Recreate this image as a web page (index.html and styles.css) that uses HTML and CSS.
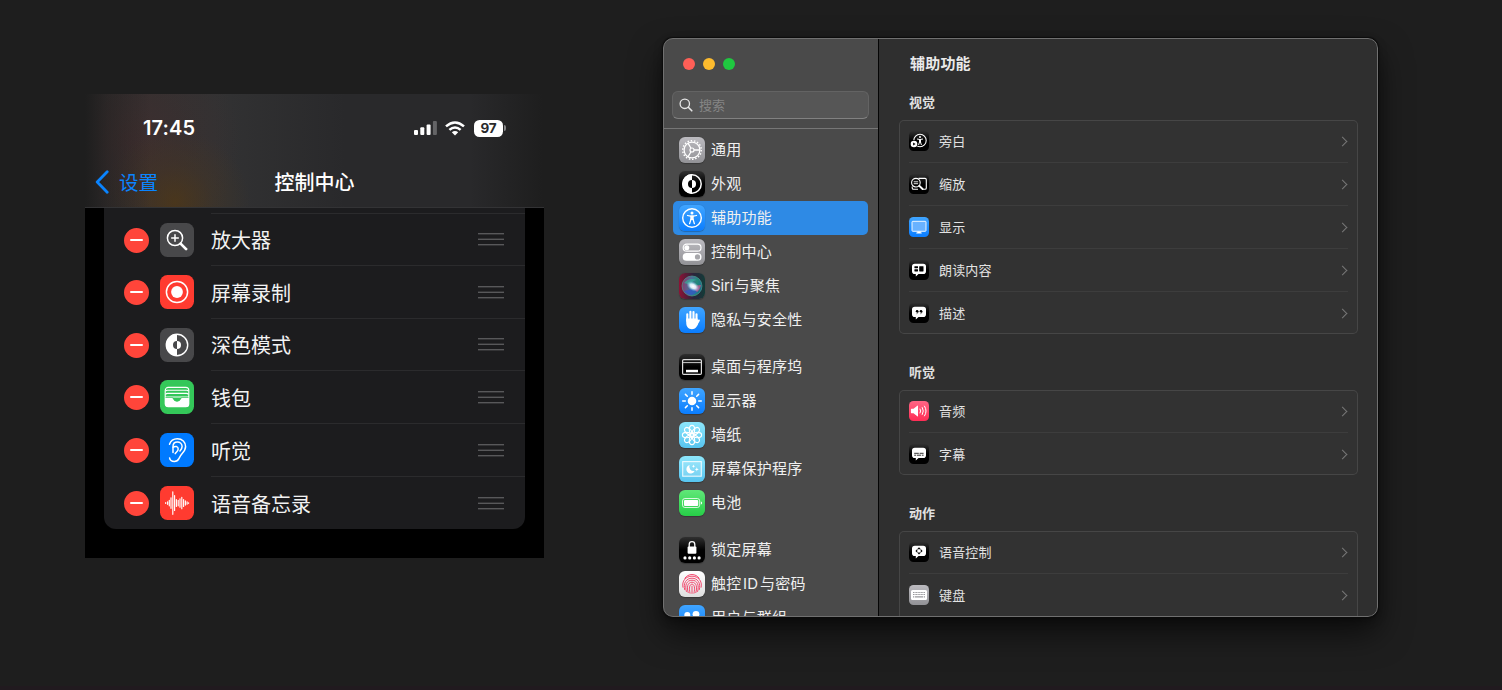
FILE: index.html
```html
<!DOCTYPE html>
<html lang="zh-CN">
<head>
<meta charset="utf-8">
<title>控制中心 · 辅助功能</title>
<link rel="stylesheet" href="styles.css">
</head>
<body>
<main class="stage">
  <section class="phone">
    <header class="phone-head">
      <div class="status">
        <span class="clock">17:45</span>
        <span class="status-icons">
          <svg width="23" height="14" viewBox="0 0 23 14"><g fill="#fff"><rect x="0" y="9" width="4" height="5" rx="1"/><rect x="6.3" y="6.2" width="4" height="7.8" rx="1"/><rect x="12.6" y="3.4" width="4" height="10.6" rx="1"/><rect x="18.9" y="0" width="4" height="14" rx="1" opacity=".28"/></g></svg>
          <svg class="wifi" width="20" height="15" viewBox="0 0 20 15"><g fill="none" stroke="#fff" stroke-width="2.5"><path d="M1 5.4Q5.4 1.4 10 1.4t9 4"/><path d="M4.400 8.800Q7 6.400 10 6.400t5.600 2.400"/></g><path fill="#fff" d="M6.800 11.300Q10 8.800 13.200 11.300L10 14.600z"/></svg>
          <span class="batt">97</span><span class="batt-tip"></span>
        </span>
      </div>
      <div class="nav">
        <span class="back"><svg width="14" height="24" viewBox="0 0 14 24"><path d="M12.200 1.800L2.200 12l10 10.200" fill="none" stroke="#0a84ff" stroke-width="2.800" stroke-linecap="round" stroke-linejoin="round"/></svg><span>设置</span></span>
        <span class="nav-title">控制中心</span>
      </div>
    </header>
    <div class="phone-body">
      <div class="card">
        <div class="stub"></div>
        <div class="prow"><i class="minus"></i><svg class="picon" viewBox="0 0 34 34"><rect width="34" height="34" rx="7.500" fill="#48484a"/><g fill="none" stroke="#fff" stroke-linecap="round"><circle cx="15" cy="15" r="7.600" stroke-width="1.500"/><path d="M15 11.700v6.600M11.700 15h6.600" stroke-width="1.500"/><path d="M20.600 20.600l5.500 5.500" stroke-width="2.700"/></g></svg><div class="plabel"><span>放大器</span><span class="grip"></span></div></div>
        <div class="prow tall"><i class="minus"></i><svg class="picon" viewBox="0 0 34 34"><rect width="34" height="34" rx="7.500" fill="#ff3b30"/><circle cx="17" cy="17" r="10.600" fill="none" stroke="#fff" stroke-width="1.500"/><circle cx="17" cy="17" r="5.900" fill="#fff"/></svg><div class="plabel"><span>屏幕录制</span><span class="grip"></span></div></div>
        <div class="prow"><i class="minus"></i><svg class="picon" viewBox="0 0 34 34"><rect width="34" height="34" rx="7.500" fill="#48484a"/><circle cx="17" cy="17" r="10.700" fill="none" stroke="#fff" stroke-width="1.400"/><path fill="#fff" d="M17 6a11 11 0 0 0 0 22v-7a4 4 0 0 1 0-8z"/><path fill="#fff" d="M17 13a4 4 0 0 1 0 8z"/></svg><div class="plabel"><span>深色模式</span><span class="grip"></span></div></div>
        <div class="prow tall"><i class="minus"></i><svg class="picon" viewBox="0 0 34 34"><rect width="34" height="34" rx="7.500" fill="#34c759"/><rect x="5.200" y="7.400" width="23.600" height="19.400" rx="3" fill="none" stroke="#fff" stroke-width="1.100"/><path d="M5.500 11.200q.8-.9 2-.9h19q1.200 0 2 .9M5.500 14.300q.8-.9 2-.9h19q1.200 0 2 .9" fill="none" stroke="#fff" stroke-width="1.100"/><path fill="#fff" d="M5 16.500h24V24q0 3-3 3H8q-3 0-3-3z"/><path fill="#34c759" d="M5.500 17.200h6.300c1.200 0 1.700.5 2.300 1.500.7 1.300 1.600 2.100 2.900 2.100s2.200-.8 2.900-2.100c.6-1 1.100-1.500 2.300-1.500h6.300v.9h-6c-1 0-1.300.5-1.800 1.200-.9 1.500-2 2.200-3.700 2.200s-2.800-.7-3.700-2.200c-.5-.7-.8-1.200-1.800-1.200h-6z"/><path fill="#34c759" d="M12.500 17.600h9l-2.200 3.200q-2.300 1.400-4.600 0z"/></svg><div class="plabel"><span>钱包</span><span class="grip"></span></div></div>
        <div class="prow tall"><i class="minus"></i><svg class="picon" viewBox="0 0 34 34"><rect width="34" height="34" rx="7.500" fill="#007aff"/><g fill="none" stroke="#fff" stroke-width="1.500" stroke-linecap="round" stroke-linejoin="round"><path d="M9.500 11.300C10.700 7.700 13.600 5.700 17.300 5.700c5 0 8.300 3.400 8.300 7.900 0 3.100-1.300 4.700-3.400 7-1.700 1.900-2.300 3-3.300 5-1 2-2.500 2.800-4.600 2.800-2.500 0-4.400-1.200-4.700-3.500"/><path d="M13 19.600V13.700c0-2.800 1.800-4.700 4.300-4.700 2.700 0 4.800 1.900 4.800 4.600 0 2-1 3-2.200 4.400"/><path d="M13.200 14.300c1.800-1.600 5-1 5 1.700 0 2.300-2.200 3.200-3 4.600"/></g></svg><div class="plabel"><span>听觉</span><span class="grip"></span></div></div>
        <div class="prow last"><i class="minus"></i><svg class="picon" viewBox="0 0 34 34"><rect width="34" height="34" rx="7.500" fill="#ff3b30"/><path d="M5.700 16.600v.8M7.600 15.700v2.600M9.300 14.200v5.600M11 11.700v10.600M12.800 5.800v22.500M14.600 9.500v15M16.400 13.500v7M18.200 14.200v5.600M20 12.800v8.400M21.800 11.300v11.400M23.600 13.500v7M25.400 14.900v4.200M27.100 15.800v2.400M28.600 16.700v.6" stroke="#fff" stroke-width="1.150" stroke-linecap="round"/></svg><div class="plabel"><span>语音备忘录</span><span class="grip"></span></div></div>
      </div>
    </div>
  </section>

  <section class="window">
    <aside class="side">
      <div class="lights"><i class="red"></i><i class="yellow"></i><i class="green"></i></div>
      <div class="search"><svg width="14" height="14" viewBox="0 0 14 14"><g fill="none" stroke="#e6e6e6" stroke-width="1.300" stroke-linecap="round"><circle cx="5.800" cy="5.800" r="4.700"/><path d="M9.300 9.300l3.500 3.500" stroke-width="1.600"/></g></svg>搜索</div>
      <ul class="menu">
        <li><svg class="mi gray" viewBox="0 0 26 26"><g fill="none" stroke="#fff"><circle cx="13" cy="13" r="7.900" stroke-width="1.300"/><circle cx="13" cy="13" r="9.300" stroke-width="1.500" stroke-dasharray="1.500 1.746"/><circle cx="13" cy="13" r="2" stroke-width="1.200"/><path d="M15 13h6M12 11.300L9 6.100M12 14.700L9 19.900" stroke-width="1.300"/></g></svg>通用</li>
        <li><svg class="mi black" viewBox="0 0 26 26"><circle cx="13" cy="13" r="9.200" fill="none" stroke="#fff" stroke-width="1.500"/><path fill="#fff" d="M13 3.100a9.900 9.900 0 0 0 0 19.800v-5.900a4 4 0 0 1 0-8z"/><path fill="#fff" d="M13 9a4 4 0 0 1 0 8z"/></svg>外观</li>
        <li class="on"><svg class="mi blue" viewBox="0 0 26 26"><circle cx="13" cy="13" r="9.300" fill="none" stroke="#fff" stroke-width="1.400"/><circle cx="13" cy="7.900" r="1.500" fill="#fff"/><path d="M8.500 10.500l3.200.6h2.600l3.200-.6M11.900 14.500L10.600 18.700M14.100 14.500l1.300 4.200" fill="none" stroke="#fff" stroke-width="1.250" stroke-linecap="round" stroke-linejoin="round"/><path d="M11.300 10.600h3.400v4.400h-3.400z" fill="#fff"/></svg>辅助功能</li>
        <li><svg class="mi gray" viewBox="0 0 26 26"><rect x="4.200" y="5.200" width="17.800" height="6.900" rx="3.450" fill="none" stroke="#fff" stroke-width="1.200"/><circle cx="7.800" cy="8.650" r="2.500" fill="#fff"/><rect x="3.700" y="14.100" width="18.800" height="7.700" rx="3.850" fill="#fff"/><circle cx="18.500" cy="17.950" r="2.600" fill="#a6a6aa"/></svg>控制中心</li>
        <li><svg class="mi siri" viewBox="0 0 26 26"><defs><linearGradient id="siri-bg"><stop stop-color="#8d1235"/><stop offset=".55" stop-color="#2c243b"/><stop offset="1" stop-color="#123c38"/></linearGradient><linearGradient id="siri-orb" x1="0" y1=".4" x2="1" y2=".6"><stop stop-color="#8c3a6c"/><stop offset=".42" stop-color="#4a6f98"/><stop offset=".7" stop-color="#238a78"/><stop offset="1" stop-color="#196a90"/></linearGradient><radialGradient id="siri-glow"><stop stop-color="#fff"/><stop offset=".45" stop-color="#e6f6ff" stop-opacity=".9"/><stop offset="1" stop-color="#7ac8f4" stop-opacity="0"/></radialGradient></defs><rect width="26" height="26" rx="6" fill="url(#siri-bg)"/><circle cx="13" cy="13" r="10" fill="url(#siri-orb)" stroke="#4e9a92" stroke-width=".7"/><path d="M5 18q8-1 16-5-2 8-8 9-5 0-8-4" fill="#3156c8" opacity=".75"/><path d="M12 13l10-1q-1 5-4 7z" fill="#dd527d" opacity=".7"/><path d="M5 10q5-6 13-3-4 0-6 5z" fill="#32b599" opacity=".65"/><ellipse cx="14" cy="13.300" rx="7" ry="4.500" transform="rotate(30 14 13.300)" fill="url(#siri-glow)"/></svg><span><span class="siri-word">Siri</span>与聚焦</span></li>
        <li><svg class="mi blue" viewBox="0 0 26 26"><g fill="none" stroke="#fff" stroke-width="2.100" stroke-linecap="round"><path d="M8.300 14V7.200M11.400 13V4.800M14.500 13V5M17.500 14V7.300M17.300 17.800l2.500-4.300"/></g><path fill="#fff" d="M7.250 11.500h11.300l.7 4.300c-1 4-3 6.400-6.300 6.400-3.500 0-5.700-2.600-5.700-6.200z"/></svg>隐私与安全性</li>
        <li class="gap"><svg class="mi black" viewBox="0 0 26 26"><rect x="3.600" y="5.600" width="18.800" height="14.800" rx="1.200" fill="none" stroke="#ddd" stroke-width="1.200"/><path d="M4 8.600h18" stroke="#ccc" stroke-width="1"/><rect x="7" y="15.800" width="12" height="2.500" fill="#fff"/></svg>桌面与程序坞</li>
        <li><svg class="mi blue" viewBox="0 0 26 26"><circle cx="13" cy="13" r="4.300" fill="#fff"/><path d="M13 3.700v2.600M13 19.700v2.600M3.700 13h2.600M19.700 13h2.600M6.400 6.400l1.900 1.900M17.700 17.700l1.900 1.900M6.400 19.600l1.900-1.900M17.700 8.300l1.900-1.900" stroke="#fff" stroke-width="1.500" stroke-linecap="round"/></svg>显示器</li>
        <li><svg class="mi cyan" viewBox="0 0 26 26"><g fill="none" stroke="#fff" stroke-width="1.150"><ellipse cx="13" cy="7.500" rx="2.700" ry="4.100"/><ellipse cx="13" cy="7.500" rx="2.700" ry="4.100" transform="rotate(45 13 13)"/><ellipse cx="13" cy="7.500" rx="2.700" ry="4.100" transform="rotate(90 13 13)"/><ellipse cx="13" cy="7.500" rx="2.700" ry="4.100" transform="rotate(135 13 13)"/><ellipse cx="13" cy="7.500" rx="2.700" ry="4.100" transform="rotate(180 13 13)"/><ellipse cx="13" cy="7.500" rx="2.700" ry="4.100" transform="rotate(225 13 13)"/><ellipse cx="13" cy="7.500" rx="2.700" ry="4.100" transform="rotate(270 13 13)"/><ellipse cx="13" cy="7.500" rx="2.700" ry="4.100" transform="rotate(315 13 13)"/><circle cx="13" cy="13" r="2"/></g></svg>墙纸</li>
        <li><svg class="mi cyan" viewBox="0 0 26 26"><rect x="3.700" y="5.600" width="18.600" height="14.600" fill="#fff" fill-opacity=".15" stroke="#fff" stroke-opacity=".85" stroke-width="1.100"/><path fill="#fff" d="M10.600 9a4.300 4.300 0 1 0 5 5.900A4.300 4.300 0 0 1 10.600 9zM14.500 8.600l.5 1.200 1.200.5-1.200.5-.5 1.200-.5-1.200-1.200-.5 1.200-.5zM17.800 11.300l.5 1.500 1.500.6-1.500.6-.5 1.500-.5-1.500-1.500-.6 1.500-.6z"/></svg>屏幕保护程序</li>
        <li><svg class="mi lime" viewBox="0 0 26 26"><rect x="3.500" y="8.500" width="17.200" height="9" rx="2.400" fill="none" stroke="#fff" stroke-opacity=".8" stroke-width="1"/><rect x="5" y="10" width="14.200" height="6" rx="1" fill="#fff"/><path d="M21.900 11.400q1.200.3 1.200 1.600t-1.200 1.600z" fill="#fff"/></svg>电池</li>
        <li class="gap"><svg class="mi black" viewBox="0 0 26 26"><rect x="8.600" y="9.500" width="8.800" height="7.300" rx="1" fill="#fff"/><path d="M10.200 10V7.500a2.800 2.800 0 0 1 5.600 0V10" fill="none" stroke="#fff" stroke-width="1.300"/><g fill="#fff"><circle cx="6" cy="20.900" r="1.600"/><circle cx="10.700" cy="20.900" r="1.600"/><circle cx="15.400" cy="20.900" r="1.600"/><circle cx="20.100" cy="20.900" r="1.600"/></g></svg>锁定屏幕</li>
        <li><svg class="mi white" viewBox="0 0 26 26"><g fill="none" stroke="#f24c70" stroke-width="1" stroke-linecap="round"><path d="M5.800 7.200C9.500 2.200 16.500 2.200 20.200 7.200"/><path d="M3.900 16.200C2.500 9.800 7 5.200 13 5.200s10.500 4.600 9.200 11"/><path d="M5.700 18.700C3.800 12 7.500 7.200 13 7.200s9.200 4.800 7.300 11.500"/><path d="M7.400 20.500C5.500 14.200 7.700 9.200 13 9.200s7.500 5 5.600 11.300"/><path d="M9.200 21.600C7.500 16.500 8.500 11.200 13 11.200s5.500 5.300 3.800 10.400"/><path d="M11 22.200C9.800 17 10.500 13.200 13 13.200s3.200 3.800 2 9"/><path d="M13 15.200v7.200"/></g></svg><span>触控<span class="id-word">ID</span>与密码</span></li>
        <li><svg class="mi blue" viewBox="0 0 26 26"><g fill="#fff"><circle cx="8.300" cy="10" r="3"/><circle cx="17" cy="9.300" r="3.400"/><path d="M3 19q0-5 5.300-5t5.300 5z"/><path d="M11 20q0-6 6-6t6 6z"/></g></svg>用户与群组</li>
      </ul>
    </aside>

    <div class="pane">
      <h1>辅助功能</h1>
      <h2>视觉</h2>
      <div class="box">
        <div class="row"><svg class="ri black" viewBox="0 0 20 20"><circle cx="11" cy="9.500" r="6.200" fill="none" stroke="#fff" stroke-width="1.100"/><circle cx="11" cy="6" r="1" fill="#fff"/><path d="M8 8l2.300.4h1.400L14 8M10.500 11l-.9 3M11.500 11l.9 3" fill="none" stroke="#fff" stroke-width="1"/><path d="M10 8h2v3.500h-2z" fill="#fff"/><circle cx="5" cy="13" r="3.900" fill="#000"/><circle cx="5" cy="13" r="3.300" fill="#fff"/><path d="M4.100 11.400v3.200L6.600 13z" fill="#000"/></svg>旁白<b></b></div>
        <div class="row"><svg class="ri black" viewBox="0 0 20 20"><path d="M9.500 4.400H16q1.300 0 1.300 1.300v8.200q0 1.300-1.300 1.300h-2M3.200 12.500v1.400q0 1.300 1.300 1.300H9" fill="none" stroke="#fff" stroke-width="1.100"/><circle cx="6.900" cy="8.700" r="4.300" fill="none" stroke="#fff" stroke-width="1.100"/><path d="M4.700 7.800h4.400M4.700 9.700h4.400" stroke="#fff" stroke-width=".9"/><path d="M10.200 11.800l3.400 3.200" stroke="#fff" stroke-width="1.900" stroke-linecap="round"/></svg>缩放<b></b></div>
        <div class="row"><svg class="ri blue" viewBox="0 0 20 20"><rect x="3" y="4.300" width="14" height="10" rx=".8" fill="#69b2ff" stroke="#fff" stroke-width=".9"/><path d="M8.300 14.500h3.400v1.100h1v1H7.300v-1h1z" fill="#fff"/></svg>显示<b></b></div>
        <div class="row"><svg class="ri black" viewBox="0 0 20 20"><path class="bubble" d="M5.800 3.800h8.400q2.800 0 2.800 2.800v4.600q0 2.800-2.800 2.800H9.500l-2.700 2.600V14h-1Q3 14 3 11.200V6.600q0-2.800 2.800-2.800z"/><rect x="5.400" y="6.200" width="3.600" height="2" rx=".4"/><rect x="5.400" y="9.200" width="3.600" height="2.200" rx=".4"/><rect x="10.200" y="6.200" width="4.300" height="5.200" rx=".4"/></svg>朗读内容<b></b></div>
        <div class="row"><svg class="ri black" viewBox="0 0 20 20"><path class="bubble" d="M5.800 3.800h8.400q2.800 0 2.800 2.800v4.600q0 2.800-2.800 2.800H9.500l-2.700 2.600V14h-1Q3 14 3 11.200V6.600q0-2.800 2.800-2.800z"/><circle cx="8.100" cy="8.200" r="1.300"/><circle cx="12" cy="8.200" r="1.300"/><path d="M9.100 8.200q.2 2-1.500 2.500M13 8.200q.2 2-1.500 2.500" fill="none" stroke="#000" stroke-width=".7"/></svg>描述<b></b></div>
      </div>
      <h2>听觉</h2>
      <div class="box">
        <div class="row"><svg class="ri pink" viewBox="0 0 20 20"><path d="M2.500 7.800h2L8.300 4.700q.7-.4.700.4v9.800q0 .8-.7.400l-3.800-3.100h-2q-.6 0-.6-.7V8.500q0-.7.600-.7z" fill="#fff"/><g fill="none" stroke="#fff" stroke-width="1" stroke-linecap="round"><path d="M11.100 8q1.100 2 0 4M13.300 6.500q2.100 3.500 0 7"/><path d="M15.500 5.100q3.200 4.900 0 9.800"/></g></svg>音频<b></b></div>
        <div class="row"><svg class="ri black" viewBox="0 0 20 20"><path class="bubble" d="M5.800 3.800h8.400q2.800 0 2.800 2.800v4.600q0 2.800-2.800 2.800H9.500l-2.700 2.600V14h-1Q3 14 3 11.200V6.600q0-2.800 2.800-2.800z"/><path d="M5.200 9.300h4.600M10.600 9.300h4M5.200 11.200h1.800M7.800 11.200h4.200M12.800 11.200h1.800" stroke="#000" stroke-width=".8"/></svg>字幕<b></b></div>
      </div>
      <h2>动作</h2>
      <div class="box">
        <div class="row"><svg class="ri black" viewBox="0 0 20 20"><path class="bubble" d="M5.800 3.800h8.400q2.800 0 2.800 2.800v4.600q0 2.800-2.800 2.800H9.500l-2.700 2.600V14h-1Q3 14 3 11.200V6.600q0-2.800 2.800-2.800z"/><path d="M10 5.300l1.900 1.900H8.100zM10 12.500l1.900-1.900H8.100zM6.400 8.900l1.900-1.900v3.800zM13.600 8.900l-1.900-1.900v3.800z"/></svg>语音控制<b></b></div>
        <div class="row"><svg class="ri gray" viewBox="0 0 20 20"><rect x="2" y="5" width="16" height="10" rx="1.500" fill="#fff"/><path d="M4 7.500h12M4 9.500h12" stroke="#98989c" stroke-width="1.200" stroke-dasharray="1.100 .45"/><path d="M4 11.900h1.300M6 11.900h8M14.700 11.900H16" stroke="#98989c" stroke-width="1.300"/></svg>键盘<b></b></div>
        <div class="row"></div>
      </div>
    </div>
  </section>
</main>
</body>
</html>
```
FILE: styles.css
```css
* { box-sizing: border-box; }
body {
  margin: 0;
  background: #1e1e1e;
  color: #fff;
  font-family: Inter, "Noto Sans CJK SC", sans-serif;
}
svg { display: block; flex: none; }
.stage {
  height: 690px;
  overflow: hidden;
  display: flex;
  align-items: flex-start;
  padding-left: 85px;
  border-bottom: 4px solid #211a1f;
}

/* phone */
.phone { width: 459px; height: 464px; margin-top: 94px; background: #000; }
.phone-head {
  height: 114px;
  border-bottom: 1px solid #333335;
  background:
    linear-gradient(90deg, #1e1e1e 0, rgba(30,30,30,.5) 22px, rgba(30,30,30,0) 65px, rgba(30,30,30,0) 385px, #1e1e1e 458px),
    radial-gradient(ellipse 75px 72px at 90px 108px, rgba(80,56,22,.75), rgba(72,54,32,.4) 50%, transparent),
    radial-gradient(ellipse 110px 110px at 45px 48px, rgba(70,44,44,.6), transparent),
    linear-gradient(90deg, #303030 0, #323233 130px, #29292b 260px, #29292b 100%);
}
.status { height: 68px; display: flex; justify-content: space-between; align-items: center; padding: 0 38px 0 58px; }
.clock { font-size: 20px; font-weight: 600; letter-spacing: .1px; }
.status-icons { display: flex; align-items: center; }
.wifi { margin: 0 9px 0 8px; }
.batt {
  width: 29px; height: 17px; border-radius: 5.500px; background: #fff; color: #29292b;
  font-size: 13.500px; font-weight: 700; line-height: 17px; text-align: center; letter-spacing: -.2px;
}
.batt-tip { width: 2px; height: 6px; margin-left: 1px; border-radius: 0 3px 3px 0; background: #858587; }
.nav { height: 40px; display: grid; grid-template-columns: 1fr auto 1fr; align-items: center; padding: 0 10px; }
.back { display: flex; align-items: center; gap: 10px; font-size: 19.500px; color: #0a84ff; line-height: 28px; }
.back span { padding-top: 2px; }
.nav-title { padding-top: 2px; font-size: 20px; font-weight: 500; line-height: 28px; }
.phone-body { padding: 0 19px; }
.card { height: 321px; background: #1c1c1e; border-radius: 0 0 12px 12px; overflow: hidden; }
.stub { height: 6px; margin-left: 107px; border-bottom: 1px solid #2b2b2d; }
.prow { height: 52px; display: flex; align-items: center; padding-left: 20px; }
.tall { height: 53px; }
.minus { width: 25px; height: 25px; border-radius: 50%; background: #ff453a; display: grid; place-items: center; }
.minus::after { content: ""; width: 13px; height: 2px; border-radius: 1px; background: #fff; }
.picon { width: 34px; height: 34px; margin-left: 11px; }
.tall .picon, .tall .minus { margin-top: -1px; }
.plabel {
  flex: 1; height: 100%; margin-left: 17px; padding-right: 21px; border-bottom: 1px solid #2b2b2d;
  display: flex; align-items: center; justify-content: space-between;
  color: #f2f2f2; font-size: 20px; font-weight: 400; line-height: 28px;
}
.plabel span:first-child { padding-top: 3px; }
.last .plabel { border-bottom: 0; }
.grip {
  width: 26px; height: 13px;
  background: linear-gradient(#58585a 0 1px, #333335 1px 2px, transparent 2px 5px, #333335 5px 6px, #58585a 6px 7px, transparent 7px 11px, #58585a 11px 12px, #333335 12px);
}

/* settings window */
.window {
  position: relative;
  width: 715px; height: 579px; margin: 38px 0 0 119px;
  display: flex; overflow: hidden; border-radius: 10px; background: #2f2f2f;
  box-shadow: 0 0 1px 1px #0c0c0c, 0 16px 32px rgba(0,0,0,.6), 0 3px 10px rgba(0,0,0,.3);
}
.window::after { content: ""; position: absolute; inset: 0; border: 1px solid #707070; border-radius: 10px; }
.side { width: 216px; flex: none; background: #4a4a4a; border-right: 1px solid #050505; }
.lights { display: flex; gap: 8px; padding: 20px 0 0 20px; }
.lights i { width: 12px; height: 12px; border-radius: 50%; }
.red { background: #ff5f57; }
.yellow { background: #febc2e; }
.green { background: #1fc840; }
.search {
  width: 197px; height: 28px; margin: 21px 0 9px 9px; padding-left: 6px;
  display: flex; align-items: center; gap: 6px;
  border: 1px solid #636363; border-bottom-color: #818181; border-radius: 6px; background: #565656;
  color: #858585; font-size: 13px; line-height: 18px;
}
.menu { list-style: none; margin: 0; padding: 4px 10px 0; border-top: 1px solid #767676; }
.menu li {
  height: 34px; padding-left: 6px; display: flex; align-items: center; gap: 6px; border-radius: 5px;
  color: #f0f0f0; font-size: 15px; letter-spacing: .25px; line-height: 22px; white-space: nowrap;
}
.siri-word { margin-right: 1px; letter-spacing: -.1px; }
.id-word { margin: 0 1.500px; }
.menu .gap { margin-top: 13px; }
.menu .on { background: #2e8ae5; }
.mi { width: 26px; height: 26px; border-radius: 6px; box-shadow: 0 .5px 1px rgba(0,0,0,.25); }
.gray { background: linear-gradient(#bcbbc0, #929296); }
.black { background: linear-gradient(#303030, #000 50%); }
.blue { background: linear-gradient(#40a5ff, #0a7dff); }
.cyan { background: linear-gradient(#8de6fb, #57c4ef); }
.lime { background: linear-gradient(#60e778, #27cf48); }
.white { background: linear-gradient(#fff, #dedede); }
.pink { background: linear-gradient(#ff6685, #ff2d55); }

.pane { flex: 1; padding: 15px 20px 0; }
h1 { margin: 0 0 0 11px; font-size: 15px; font-weight: 700; line-height: 22px; letter-spacing: .2px; color: #e9e9e9; }
h2 { margin: 18px 0 9px 10px; font-size: 13px; font-weight: 700; line-height: 18px; color: #e0e0e0; }
.box + h2 { margin-top: 29px; }
.box { background: #323232; border-radius: 5px; box-shadow: inset 0 0 0 1px #464646; padding: 0 10px; }
.row {
  height: 43px; display: flex; align-items: center; border-bottom: 1px solid #3d3d3d;
  color: #e3e3e3; font-size: 13px; line-height: 18px; letter-spacing: .15px;
}
.row:last-child { height: 42px; border-bottom: 0; }
.ri { width: 20px; height: 20px; margin-right: 10px; border-radius: 4.500px; }
.bubble { fill: #fff; }
.row b { width: 7px; height: 7px; margin: 0 2px 0 auto; border: solid #777; border-width: 1.300px 1.300px 0 0; transform: rotate(45deg); }
```
